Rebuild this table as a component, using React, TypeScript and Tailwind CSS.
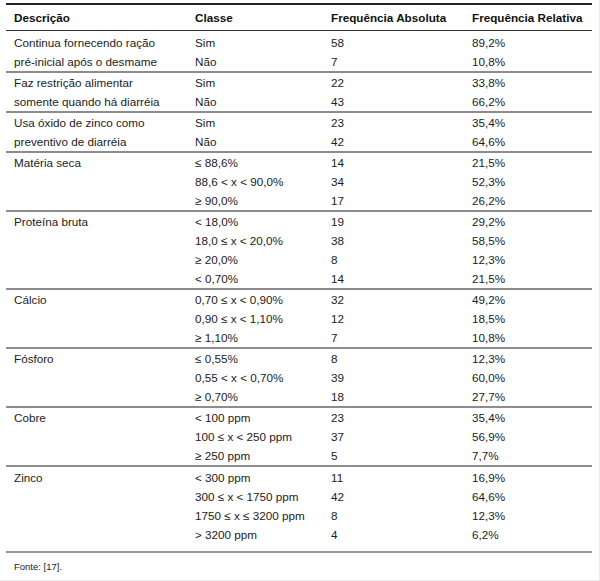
import React from "react";

type Group = { desc: string[]; rows: [string, string, string][] };

const groups: Group[] = [
  {
    desc: ["Continua fornecendo ração", "pré-inicial após o desmame"],
    rows: [
      ["Sim", "58", "89,2%"],
      ["Não", "7", "10,8%"],
    ],
  },
  {
    desc: ["Faz restrição alimentar", "somente quando há diarréia"],
    rows: [
      ["Sim", "22", "33,8%"],
      ["Não", "43", "66,2%"],
    ],
  },
  {
    desc: ["Usa óxido de zinco como", "preventivo de diarréia"],
    rows: [
      ["Sim", "23", "35,4%"],
      ["Não", "42", "64,6%"],
    ],
  },
  {
    desc: ["Matéria seca"],
    rows: [
      ["≤ 88,6%", "14", "21,5%"],
      ["88,6 < x < 90,0%", "34", "52,3%"],
      ["≥ 90,0%", "17", "26,2%"],
    ],
  },
  {
    desc: ["Proteína bruta"],
    rows: [
      ["< 18,0%", "19", "29,2%"],
      ["18,0 ≤ x < 20,0%", "38", "58,5%"],
      ["≥ 20,0%", "8", "12,3%"],
      ["< 0,70%", "14", "21,5%"],
    ],
  },
  {
    desc: ["Cálcio"],
    rows: [
      ["0,70 ≤ x < 0,90%", "32", "49,2%"],
      ["0,90 ≤ x < 1,10%", "12", "18,5%"],
      ["≥ 1,10%", "7", "10,8%"],
    ],
  },
  {
    desc: ["Fósforo"],
    rows: [
      ["≤ 0,55%", "8", "12,3%"],
      ["0,55 < x < 0,70%", "39", "60,0%"],
      ["≥ 0,70%", "18", "27,7%"],
    ],
  },
  {
    desc: ["Cobre"],
    rows: [
      ["< 100 ppm", "23", "35,4%"],
      ["100 ≤ x < 250 ppm", "37", "56,9%"],
      ["≥ 250 ppm", "5", "7,7%"],
    ],
  },
  {
    desc: ["Zinco"],
    rows: [
      ["< 300 ppm", "11", "16,9%"],
      ["300 ≤ x < 1750 ppm", "42", "64,6%"],
      ["1750 ≤ x ≤ 3200 ppm", "8", "12,3%"],
      ["> 3200 ppm", "4", "6,2%"],
    ],
  },
];

export default function App() {
  return (
    <div
      className="w-[600px] h-[581px] bg-white text-[#1c1c1c] border-r border-b border-[#ececec] overflow-hidden"
      style={{ fontFamily: '"Liberation Sans", Arial, sans-serif' }}
    >
      <div className="ml-[6px] mt-[3px] w-[586px] text-[11.7px]">
        <div className="border-t-2 border-[#222] border-b border-b-[#333] h-[28px] flex items-center font-bold text-[#111]">
          <div className="w-[181px] pl-[8px]">Descrição</div>
          <div className="w-[136px] pl-[8px]">Classe</div>
          <div className="w-[141px] pl-[8px]">Frequência Absoluta</div>
          <div className="w-[128px] pl-[8px]">Frequência Relativa</div>
        </div>
        {groups.map((g, gi) => (
          <div
            key={gi}
            className={
              "flex leading-[19px] " +
              (gi === 0 ? "pt-[2px] " : "border-t-2 border-[#8c8c8c] ") +
              (gi === groups.length - 1 ? "pt-[1px] pb-[7px]" : "")
            }
          >
            <div className="w-[181px] pl-[8px]">
              {g.desc.map((d, i) => (
                <div key={i} className="h-[19px] whitespace-nowrap">
                  {d}
                </div>
              ))}
            </div>
            <div className="w-[136px] pl-[8px]">
              {g.rows.map((r, i) => (
                <div key={i} className="h-[19px] whitespace-nowrap">
                  {r[0]}
                </div>
              ))}
            </div>
            <div className="w-[141px] pl-[8px]">
              {g.rows.map((r, i) => (
                <div key={i} className="h-[19px] whitespace-nowrap">
                  {r[1]}
                </div>
              ))}
            </div>
            <div className="w-[128px] pl-[8px]">
              {g.rows.map((r, i) => (
                <div key={i} className="h-[19px] whitespace-nowrap">
                  {r[2]}
                </div>
              ))}
            </div>
          </div>
        ))}
        <div className="border-t-2 border-[#999]" />
        <div className="pl-[8px] pt-[7px] text-[9.5px] text-[#222]">Fonte: [17].</div>
      </div>
    </div>
  );
}
